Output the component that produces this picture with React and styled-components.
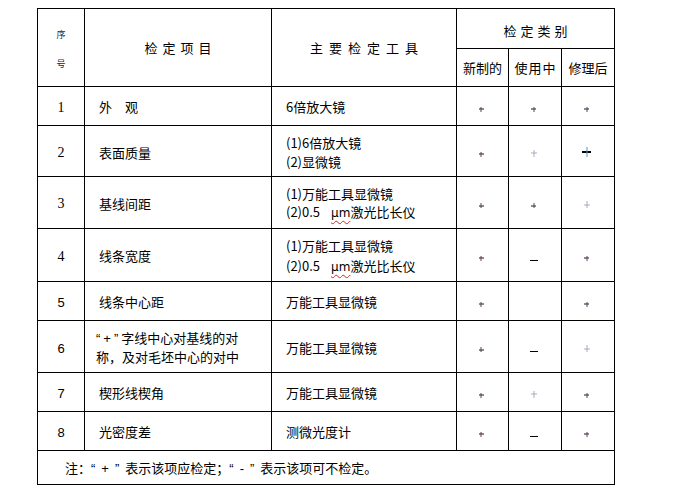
import React from 'react';
import styled, { createGlobalStyle } from 'styled-components';

const GlobalStyle = createGlobalStyle`
    html, body {
        margin: 0;
        padding: 0;
        background: #ffffff;
    }
    body {
        font-family: "Noto Sans CJK SC", "Noto Sans", sans-serif;
        color: #000000;
    }
`;

const rows = [
    { no: '1', serif: true, item: ['外　观'], tools: ['6倍放大镜'], marks: ['plus', 'plus', 'plus'], height: 39 },
    { no: '2', serif: true, item: ['表面质量'], tools: ['(1)6倍放大镜', '(2)显微镜'], marks: ['plus', 'faint', 'big'], height: 51, lh: 19 },
    { no: '3', serif: true, item: ['基线间距'], tools: ['(1)万能工具显微镜', 'mu'], marks: ['plus', 'plus', 'faint'], height: 52, lh: 18 },
    { no: '4', serif: true, item: ['线条宽度'], tools: ['(1)万能工具显微镜', 'mu'], marks: ['plus', 'minus', 'plus'], height: 53, lh: 20 },
    { no: '5', item: ['线条中心距'], tools: ['万能工具显微镜'], marks: ['plus', null, 'plus'], height: 39 },
    { no: '6', item: ['q+字线中心对基线的对', '称，及对毛坯中心的对中'], wide: true, tools: ['万能工具显微镜'], marks: ['plus', 'minus', 'faint'], height: 52, lh: 18 },
    { no: '7', item: ['楔形线楔角'], tools: ['万能工具显微镜'], marks: ['plus', 'faint', 'plus'], height: 39 },
    { no: '8', item: ['光密度差'], tools: ['测微光度计'], marks: ['plus', 'minus', 'plus'], height: 39 },
];

const Mark = ({ kind }) => {
    if (!kind) return null;
    if (kind === 'minus') return <Minus />;
    return <Plus kind={kind} />;
};

// quoted sign such as “+”, with narrow western quotes spaced out
const Quoted = ({ sign, gap }) => (
    <Glyph gap={gap}>“{sign}”</Glyph>
);

const ItemLine = ({ text }) => {
    if (text.startsWith('q+')) {
        return (
            <Line>
                <Quoted sign="+" gap={3} />{text.slice(2)}
            </Line>
        );
    }
    return <Line>{text}</Line>;
};

const ToolLine = ({ text }) => {
    if (text === 'mu') {
        return (
            <Line>
                (2)0.5<Micro>μm</Micro>激光比长仪
            </Line>
        );
    }
    return <Line>{text}</Line>;
};

export default function App() {
    return (
        <Page>
            <GlobalStyle />
            <Table>
                <colgroup>
                    <col style={{ width: 47 }} />
                    <col style={{ width: 187 }} />
                    <col style={{ width: 185 }} />
                    <col style={{ width: 52 }} />
                    <col style={{ width: 53 }} />
                    <col style={{ width: 53 }} />
                </colgroup>
                <tbody>
                    <Row height={40}>
                        <HeadCell rowSpan={2}>
                            <SmallStack>
                                <span>序</span>
                                <span>号</span>
                            </SmallStack>
                        </HeadCell>
                        <HeadCell rowSpan={2} spacing={5}>检定项目</HeadCell>
                        <HeadCell rowSpan={2} spacing={6}>主要检定工具</HeadCell>
                        <HeadCell colSpan={3} spacing={4} pad={4}>检定类别</HeadCell>
                    </Row>
                    <Row height={38}>
                        <HeadCell>新制的</HeadCell>
                        <HeadCell spacing={1}>使用中</HeadCell>
                        <HeadCell>修理后</HeadCell>
                    </Row>
                    {rows.map((row) => (
                        <Row key={row.no} height={row.height}>
                            <NumCell serif={row.serif}>{row.no}</NumCell>
                            <TextCell wide={row.wide} lh={row.lh}>
                                {row.item.map((t) => <ItemLine key={t} text={t} />)}
                            </TextCell>
                            <TextCell lh={row.lh}>
                                {row.tools.map((t, i) => <ToolLine key={i} text={t} />)}
                            </TextCell>
                            {row.marks.map((m, i) => (
                                <MarkCell key={i}>
                                    <Mark kind={m} />
                                </MarkCell>
                            ))}
                        </Row>
                    ))}
                    <Row height={34}>
                        <NoteCell colSpan={6}>
                            注：<Quoted sign="+" gap={6} />表示该项应检定；<Quoted sign="-" gap={6} />表示该项可不检定。
                        </NoteCell>
                    </Row>
                </tbody>
            </Table>
        </Page>
    );
}

const Page = styled.div`
    padding: 8px 0 0 37px;
`;

const Table = styled.table`
    border-collapse: collapse;
    table-layout: fixed;
    width: 578px;
    font-size: 13px;

    td {
        box-sizing: border-box;
        border: 1px solid #000000;
        padding: 0;
    }
`;

const Row = styled.tr`
    height: ${props => props.height}px;
`;

const HeadCell = styled.td`
    text-align: center;
    vertical-align: middle;
    letter-spacing: ${props => props.spacing || 0}px;
    text-indent: ${props => props.spacing || 0}px;
    padding-top: ${props => props.pad || 0}px !important;
    line-height: 16px;
`;

const SmallStack = styled.div`
    display: flex;
    flex-direction: column;
    align-items: center;
    gap: 17px;
    padding-top: 3px;
    font-size: 9px;
    line-height: 12px;
    color: #1c1c40;
    text-indent: 0;
    letter-spacing: 0;
`;

const NumCell = styled.td`
    text-align: center;
    vertical-align: middle;
    padding-top: 3px !important;
    font-family: ${props => props.serif ? '"Liberation Serif", serif' : '"Liberation Sans", sans-serif'};
    font-size: ${props => props.serif ? 14 : 13}px;
`;

const TextCell = styled.td`
    vertical-align: middle;
    padding: 2px 0 0 ${props => props.wide ? 11 : 14}px !important;
    line-height: ${props => props.lh || 18}px;
    white-space: nowrap;
`;

const Line = styled.div``;

const Glyph = styled.span`
    font-family: "Liberation Sans", sans-serif;
    letter-spacing: ${props => props.gap}px;
`;

const Micro = styled.span`
    margin-left: 11px;
    font-family: "DejaVu Sans", sans-serif;
    font-size: 12px;
    text-decoration: underline wavy #e02020;
    text-decoration-thickness: 1px;
    text-underline-offset: 3px;
`;

const MarkCell = styled.td`
    text-align: center;
    vertical-align: middle;
    padding: 6px 3px 0 0 !important;
    line-height: 0;
`;

const Plus = styled.span`
    display: inline-block;
    position: relative;
    width: ${props => props.kind === 'big' ? 9 : props.kind === 'faint' ? 6 : 5}px;
    height: ${props => props.kind === 'big' ? 10 : props.kind === 'faint' ? 7 : 5}px;
    margin-top: ${props => props.kind === 'plus' ? 0 : -5}px;

    &::before, &::after {
        content: '';
        position: absolute;
    }
    &::before {
        left: 0;
        right: 0;
        top: 50%;
        height: ${props => props.kind === 'big' ? 2 : 1}px;
        transform: translateY(-50%);
        background: ${props => props.kind === 'big' ? '#000000' : props.kind === 'faint' ? '#a9abbf' : '#14143a'};
    }
    &::after {
        top: 0;
        bottom: 0;
        left: 50%;
        width: 1px;
        transform: translateX(-50%);
        background: ${props => props.kind === 'big' ? '#5c8fc6' : props.kind === 'faint' ? '#a9abbf' : '#6a4050'};
    }
`;

const Minus = styled.span`
    display: inline-block;
    width: 8px;
    height: 1px;
    background: #000000;
`;

const NoteCell = styled.td`
    vertical-align: middle;
    padding-left: 27px !important;
    letter-spacing: 0;
`;
